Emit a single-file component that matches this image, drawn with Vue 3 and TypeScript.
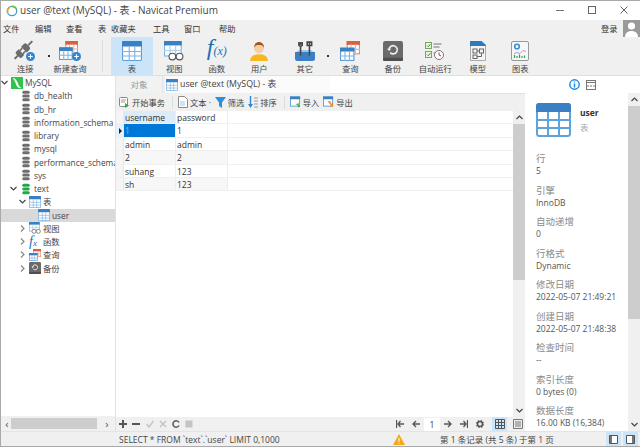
<script setup lang="ts">
const menus = [
  { label: '文件', width: 32 },
  { label: '编辑', width: 31 },
  { label: '查看', width: 32 },
  { label: '表', width: 13 },
  { label: '收藏夹', width: 42 },
  { label: '工具', width: 31 },
  { label: '窗口', width: 35 },
  { label: '帮助', width: 20 }
];

const mainTools = [
  { label: '表', icon: 'i-table', active: true, after: '' },
  { label: '视图', icon: 'i-view', after: '' },
  { label: '函数', icon: 'i-func', after: '' },
  { label: '用户', icon: 'i-user', after: 'gap' },
  { label: '其它', icon: 'i-other', after: 'dot' },
  { label: '查询', icon: 'i-query', after: '' },
  { label: '备份', icon: 'i-backup', after: '' },
  { label: '自动运行', icon: 'i-auto', after: '' },
  { label: '模型', icon: 'i-model', after: '' },
  { label: '图表', icon: 'i-chart', after: '' }
];

type TreeRow = { label: string; icon: string; chevron?: 'down' | 'right'; depth: number; selected?: boolean };

const tree: TreeRow[] = [
  { label: 'MySQL', icon: 'i-mysql', chevron: 'down', depth: 0 },
  { label: 'db_health', icon: 'i-db', depth: 1 },
  { label: 'db_hr', icon: 'i-db', depth: 1 },
  { label: 'information_schema', icon: 'i-db', depth: 1 },
  { label: 'library', icon: 'i-db', depth: 1 },
  { label: 'mysql', icon: 'i-db', depth: 1 },
  { label: 'performance_schema', icon: 'i-db', depth: 1 },
  { label: 'sys', icon: 'i-db', depth: 1 },
  { label: 'text', icon: 'i-db-on', chevron: 'down', depth: 1 },
  { label: '表', icon: 'i-table', chevron: 'down', depth: 2 },
  { label: 'user', icon: 'i-table', depth: 3, selected: true },
  { label: '视图', icon: 'i-view', chevron: 'right', depth: 2 },
  { label: '函数', icon: 'i-func', chevron: 'right', depth: 2 },
  { label: '查询', icon: 'i-query', chevron: 'right', depth: 2 },
  { label: '备份', icon: 'i-backup', chevron: 'right', depth: 2 }
];

const rows = [
  ['1', '1'],
  ['admin', 'admin'],
  ['2', '2'],
  ['suhang', '123'],
  ['sh', '123']
];

const info = [
  ['行', '5'],
  ['引擎', 'InnoDB'],
  ['自动递增', '0'],
  ['行格式', 'Dynamic'],
  ['修改日期', '2022-05-07 21:49:21'],
  ['创建日期', '2022-05-07 21:48:38'],
  ['检查时间', '--'],
  ['索引长度', '0 bytes (0)'],
  ['数据长度', '16.00 KB (16,384)']
];
</script>

<template>
  <div class="window">
    <svg class="defs" width="0" height="0">
      <symbol id="i-table" viewBox="0 0 18 18">
        <rect x=".5" y=".5" width="17" height="17" rx="1" fill="#fff" stroke="#5c9bd6" />
        <rect width="18" height="5" rx="1" fill="#3b80c2" />
        <path d="M6.500 5v13M11.500 5v13M0 9.500h18M0 13.500h18" stroke="#7db4e6" fill="none" />
      </symbol>
      <symbol id="i-table-big" viewBox="0 0 35 34">
        <rect x="1" y="1" width="33" height="32" rx="2.500" fill="#fff" stroke="#5fa3dc" stroke-width="2" />
        <path d="M0 3a3 3 0 0 1 3-3h29a3 3 0 0 1 3 3v6H0z" fill="#3b80c2" />
        <path d="M12 9v24M23 9v24M1 17h33M1 25h33" stroke="#5fa3dc" stroke-width="2" fill="none" />
      </symbol>
      <symbol id="i-db" viewBox="-1 -1 12 16">
        <g fill="#6e6e6e">
          <rect y="0" width="10" height="4" rx="2" />
          <rect y="5" width="10" height="4" rx="2" />
          <rect y="10" width="10" height="4" rx="2" />
        </g>
      </symbol>
      <symbol id="i-db-on" viewBox="-1 -1 12 16">
        <g fill="#1fa84a">
          <rect y="0" width="10" height="4" rx="2" />
          <rect y="5" width="10" height="4" rx="2" />
          <rect y="10" width="10" height="4" rx="2" />
        </g>
      </symbol>
      <symbol id="i-mysql" viewBox="0 0 14 14">
        <rect width="14" height="14" fill="#2fc24d" />
        <path d="M2 1c3 1 5 3 6 6s2 4 4 6c-3 0-5-1-6-4S4 4 2 1z" fill="#fff" />
      </symbol>
      <symbol id="i-view" viewBox="0 0 18 18">
        <rect x=".5" y=".5" width="15" height="13" fill="#fff" stroke="#7db4e6" />
        <rect width="16" height="4" fill="#3b80c2" />
        <path d="M5.500 4v10M10.500 4v10M0 8.500h16" stroke="#a9cfee" fill="none" />
        <circle cx="7.500" cy="14" r="3" fill="#fff" stroke="#555" />
        <circle cx="14" cy="14" r="3" fill="#fff" stroke="#555" />
      </symbol>
      <symbol id="i-user" viewBox="0 0 18 18">
        <path d="M1 18c0-4 3-6 8-6s8 2 8 6z" fill="#f6b81f" />
        <circle cx="9" cy="6.500" r="4.500" fill="#f6cda5" />
        <path d="M4.500 6c0-3 2-5 4.500-5s4.500 2 4.500 5c-1-2-2-2.500-4.500-2.500S5.500 4 4.500 6z" fill="#a3561c" />
      </symbol>
      <symbol id="i-other" viewBox="0 0 18 18">
        <path d="M0 10h18v6a2 2 0 0 1-2 2H2a2 2 0 0 1-2-2z" fill="#3b80c2" />
        <path d="M1 10l3-2h10l3 2z" fill="#9cc6e8" />
        <path d="M5 1v2.500M3.500 1v3l1.500 1 1.500-1V1M5 5v8" stroke="#444" stroke-width="1.400" fill="none" />
        <path d="M13 1v12M11 1h4v3h-4z" stroke="#444" stroke-width="1.400" fill="none" />
      </symbol>
      <symbol id="i-query" viewBox="0 0 18 18">
        <rect x="6.500" y=".5" width="11" height="11" fill="#fff" stroke="#e58a72" />
        <rect x="6" width="12" height="3.500" fill="#dc5f41" />
        <path d="M10 3v9M14 3v9M6 7.500h12" stroke="#eeb0a0" fill="none" />
        <rect x=".5" y="6.500" width="12" height="11" fill="#fff" stroke="#5c9bd6" />
        <rect y="6" width="13" height="3.500" fill="#3b80c2" />
        <path d="M4.500 9v9M8.500 9v9M0 13.500h13" stroke="#7db4e6" fill="none" />
      </symbol>
      <symbol id="i-backup" viewBox="0 0 18 18">
        <rect width="18" height="18" rx="2" fill="#6a6a6a" />
        <rect y="15" width="18" height="3" rx="1" fill="#4f4f4f" />
        <path d="M5.500 7.500a3.700 3.700 0 1 1 1 3" stroke="#eee" stroke-width="1.500" fill="none" />
        <path d="M3.500 7h4l-2 2z" fill="#eee" />
      </symbol>
      <symbol id="i-auto" viewBox="0 0 20 18">
        <rect x=".5" y=".5" width="6" height="6" fill="#eaf4e2" stroke="#7aa85a" />
        <rect x=".5" y="9.500" width="6" height="6" fill="#eaf4e2" stroke="#7aa85a" />
        <path d="M2 3.500l1.300 1.300L5.500 2M2 12.500l1.300 1.300L5.500 11" stroke="#3e9a2d" fill="none" />
        <path d="M8.500 2h8M8.500 5h6M8.500 11h2" stroke="#777" fill="none" />
        <circle cx="14" cy="13" r="4.500" fill="#fff" stroke="#777" />
        <path d="M14 10.500V13l2 1" stroke="#c0392b" fill="none" />
      </symbol>
      <symbol id="i-model" viewBox="0 0 16 20">
        <path d="M.5.500h11l4 4v15H.5z" fill="#f4f4f4" stroke="#aaa" />
        <path d="M0 0h11.500l4.500 4v1H0z" fill="#2f79bd" />
        <rect x="3" y="8" width="4" height="4" fill="none" stroke="#666" />
        <rect x="9.500" y="8" width="4" height="4" fill="none" stroke="#666" />
        <rect x="3" y="14" width="4" height="3.500" fill="none" stroke="#666" />
        <path d="M7 10h2.500M11.500 12v3.500H7" stroke="#666" fill="none" />
      </symbol>
      <symbol id="i-chart" viewBox="0 0 18 20">
        <rect x=".5" y=".5" width="17" height="19" rx="1.500" fill="#f7f7f7" stroke="#999" />
        <circle cx="6" cy="5.500" r="2.300" fill="#fff" stroke="#2f8fe0" stroke-width="1.600" />
        <path d="M3 12.500l3-1 3 1 3-3 3 1" stroke="#c58fd8" fill="none" />
        <path d="M3.500 17v-3M6 17v-2M8.500 17v-3.500M11 17v-2M13.500 17v-2.500" stroke="#2aa84e" stroke-width="1.200" fill="none" />
      </symbol>
      <symbol id="i-add" viewBox="0 0 8 8">
        <circle cx="4" cy="4" r="4" fill="#2f86d2" />
        <path d="M4 2v4M2 4h4" stroke="#fff" />
      </symbol>
    </svg>

    <header class="titlebar">
      <svg class="app-logo" viewBox="0 0 14 14">
        <circle cx="7" cy="7" r="5.500" fill="#fff" stroke="#3b9be0" stroke-width="1.500" />
        <path d="M2 9a5.500 5.500 0 0 1 2-6" stroke="#f0a020" stroke-width="2" fill="none" />
        <path d="M7 1.500a5.500 5.500 0 0 1 5 3" stroke="#6fbf3a" stroke-width="2" fill="none" />
      </svg>
      <span class="title">user @text (MySQL) - 表 - Navicat Premium</span>
      <div class="winctl">
        <svg width="9" height="9" viewBox="0 0 9 9"><path d="M0 4.500h8" stroke="#777" /></svg>
        <svg width="9" height="9" viewBox="0 0 9 9"><rect x=".5" y=".5" width="7" height="7" fill="none" stroke="#666" /></svg>
        <svg width="9" height="9" viewBox="0 0 9 9"><path d="M.5.500l7 7M7.500.500l-7 7" stroke="#666" /></svg>
      </div>
    </header>

    <nav class="menubar">
      <span v-for="m in menus" :key="m.label" :style="{ width: m.width + 'px' }">{{ m.label }}</span>
      <span class="login">登录</span>
      <div class="avatar">
        <svg width="17" height="17" viewBox="0 0 17 17">
          <circle cx="8.500" cy="6" r="3.600" fill="#fff" />
          <path d="M2 17c0-4 3-6 6.500-6s6.500 2 6.500 6z" fill="#fff" />
        </svg>
      </div>
    </nav>

    <section class="toolbar">
      <button class="tool connect">
        <span class="tool-ico">
          <svg width="22" height="21" viewBox="0 0 22 21">
            <g transform="rotate(-45 9.500 10)" fill="#6c6c6c">
              <rect x="-3" y="9" width="6" height="2" />
              <path d="M3 6h3.500v8H3a1.500 1.500 0 0 1-1.500-1.500v-5A1.500 1.500 0 0 1 3 6z" />
              <rect x="6.500" y="7" width="3.500" height="1.600" />
              <rect x="6.500" y="11.400" width="3.500" height="1.600" />
              <path d="M10 6h4a2 2 0 0 1 2 2v4a2 2 0 0 1-2 2h-4z" />
              <rect x="16" y="9" width="6" height="2" />
            </g>
            <use href="#i-add" x="12" y="12" width="9" height="9" />
          </svg>
        </span>
        <span>连接</span>
      </button>
      <i class="dot"></i>
      <button class="tool newquery">
        <span class="tool-ico">
          <svg width="22" height="21" viewBox="0 0 22 21">
            <use href="#i-query" width="19" height="19" y="1" />
            <use href="#i-add" x="13" y="12" width="9" height="9" />
          </svg>
        </span>
        <span>新建查询</span>
      </button>
      <i class="sep"></i>
      <template v-for="t in mainTools" :key="t.label">
        <button class="tool" :class="{ active: t.active }">
          <span class="tool-ico">
            <span v-if="t.icon === 'i-func'" class="fx fx-lg"><em>f</em><small>(x)</small></span>
            <svg v-else width="20" height="20"><use :href="'#' + t.icon" /></svg>
          </span>
          <span>{{ t.label }}</span>
        </button>
        <i v-if="t.after === 'dot'" class="dot"></i>
        <i v-else-if="t.after === 'gap'" class="spacer"></i>
      </template>
    </section>

    <main class="body">
      <aside class="sidebar">
        <ul class="tree">
          <li v-for="row in tree" :key="row.label + row.depth" class="tree-row" :class="[`d${row.depth}`, { selected: row.selected }]">
            <svg v-if="row.chevron" class="chev" width="7" height="7" viewBox="0 0 7 7">
              <path v-if="row.chevron === 'down'" d="M.5 2l3 3 3-3" stroke="#444" stroke-width="1.200" fill="none" />
              <path v-else d="M2 .5l3 3-3 3" stroke="#888" stroke-width="1.200" fill="none" />
            </svg>
            <i v-else class="chev"></i>
            <span v-if="row.icon === 'i-func'" class="fx tree-ico"><em>f</em><small>x</small></span>
            <svg v-else class="tree-ico"><use :href="'#' + row.icon" /></svg>
            <span class="tree-label">{{ row.label }}</span>
          </li>
        </ul>
        <div class="hscroll">
          <span class="sb-arrow">‹</span>
          <i class="hthumb"></i>
          <span class="sb-arrow">›</span>
        </div>
      </aside>

      <div class="center">
        <div class="tabs">
          <span class="tab-object">对象</span>
          <span class="tab-active">
            <svg width="12" height="12"><use href="#i-table" /></svg>
            user @text (MySQL) - 表
          </span>
          <i class="tab-rest"></i>
        </div>
        <div class="subtools">
          <span class="sub">
            <svg width="11" height="11" viewBox="0 0 11 11">
              <rect x=".5" y=".5" width="8" height="9" rx="1" fill="#fff" stroke="#888" />
              <path d="M2 3h5M2 5h4" stroke="#999" />
              <path d="M6 6l4 2.500L6 11z" fill="#3aa845" />
            </svg>
            开始事务
          </span>
          <i class="sub-sep"></i>
          <span class="sub">
            <svg width="10" height="12" viewBox="0 0 10 12">
              <path d="M.5.500h6l3 3v8h-9z" fill="#fff" stroke="#888" />
              <path d="M2 5h5v5H2z" fill="#cfe3f5" />
            </svg>
            文本 ·
          </span>
          <span class="sub">
            <svg width="11" height="11" viewBox="0 0 11 11"><path d="M0 0h11L7 5.500V11L4 9V5.500z" fill="#2f8ed6" /></svg>
            筛选
          </span>
          <span class="sub">
            <svg width="10" height="12" viewBox="0 0 10 12">
              <path d="M2.500 0v10" stroke="#2f86d2" stroke-width="1.400" />
              <path d="M0 8l2.500 4L5 8z" fill="#2f86d2" />
              <path d="M6 2h4M6 5h4M6 8h4M6 11h4" stroke="#999" />
            </svg>
            排序
          </span>
          <i class="sub-sep"></i>
          <span class="sub">
            <svg width="11" height="12" viewBox="0 0 12 12">
              <rect x=".5" y=".5" width="10" height="10" fill="#fff" stroke="#5c9bd6" />
              <rect width="11" height="3" fill="#3b80c2" />
              <path d="M11 6L6 9l2 0 1 3 2-1-2-3z" fill="#3aa845" />
            </svg>
            导入
          </span>
          <span class="sub">
            <svg width="11" height="12" viewBox="0 0 12 12">
              <rect x=".5" y=".5" width="10" height="10" fill="#fff" stroke="#5c9bd6" />
              <rect width="11" height="3" fill="#3b80c2" />
              <path d="M5 5h3l1 3 2-1.500V11H7l1.500-1.500z" fill="#f0902a" />
            </svg>
            导出
          </span>
        </div>

        <div class="grid-area">
          <div class="grid-wrap">
            <div class="grid-row head">
              <i class="gutter"></i>
              <span class="cell c-user">username</span>
              <span class="cell">password</span>
            </div>
            <div v-for="(r, i) in rows" :key="i" class="grid-row" :class="{ current: i === 0, alt: i === 2 || i === 4 }">
              <i class="gutter"><b v-if="i === 0" class="marker"></b></i>
              <span class="cell c-user">{{ r[0] }}</span>
              <span class="cell">{{ r[1] }}</span>
            </div>
          </div>
          <div class="vscroll">
            <svg class="arrow" width="7" height="5" viewBox="0 0 7 5"><path d="M.5 4l3-3 3 3" stroke="#444" stroke-width="1.200" fill="none" /></svg>
            <i class="thumb grid-thumb"></i>
            <i class="track"></i>
            <svg class="arrow" width="7" height="5" viewBox="0 0 7 5"><path d="M.5 1l3 3 3-3" stroke="#444" stroke-width="1.200" fill="none" /></svg>
          </div>
        </div>

        <div class="gridbar">
          <div class="edit-btns">
            <svg width="8" height="8" viewBox="0 0 8 8"><path d="M4 0v8M0 4h8" stroke="#555" stroke-width="2" /></svg>
            <svg width="8" height="8" viewBox="0 0 8 8"><path d="M0 4h8" stroke="#555" stroke-width="2" /></svg>
            <svg width="8" height="8" viewBox="0 0 8 8"><path d="M.5 4l2.500 3L7.500 1" stroke="#c4c4c4" stroke-width="1.500" fill="none" /></svg>
            <svg width="8" height="8" viewBox="0 0 8 8"><path d="M1 1l6 6M7 1L1 7" stroke="#c4c4c4" stroke-width="1.500" /></svg>
            <svg width="8" height="8" viewBox="0 0 8 8"><path d="M7 2.500A3.200 3.200 0 1 0 7 5.500" stroke="#555" stroke-width="1.500" fill="none" /></svg>
            <svg width="8" height="8" viewBox="0 0 8 8"><rect x=".5" y=".5" width="7" height="7" fill="#c4c4c4" /></svg>
          </div>
          <div class="pager">
            <svg width="8" height="8" viewBox="0 0 8 8"><path d="M.5 0v8M8 4H2M4.500 1L2 4l2.500 3" stroke="#555" stroke-width="1.300" fill="none" /></svg>
            <svg width="8" height="8" viewBox="0 0 8 8"><path d="M8 4H1M4 1L1 4l3 3" stroke="#555" stroke-width="1.300" fill="none" /></svg>
            <span class="page-input">1</span>
            <svg width="8" height="8" viewBox="0 0 8 8"><path d="M0 4h7M4 1l3 3-3 3" stroke="#555" stroke-width="1.300" fill="none" /></svg>
            <svg width="8" height="8" viewBox="0 0 8 8"><path d="M7.500 0v8M0 4h6M3.500 1L6 4 3.500 7" stroke="#555" stroke-width="1.300" fill="none" /></svg>
            <svg width="8" height="8" viewBox="0 0 8 8"><circle cx="4" cy="4" r="2.500" fill="none" stroke="#555" stroke-width="1.600" /><circle cx="4" cy="4" r="3.800" fill="none" stroke="#555" stroke-dasharray="1.500 1.500" /></svg>
          </div>
          <span class="view-btn on">
            <svg width="10" height="10" viewBox="0 0 10 10"><path d="M.5.500h9v9h-9zM3.500.500v9M6.500.500v9M.5 3.500h9M.5 6.500h9" stroke="#555" fill="none" /></svg>
          </span>
          <span class="view-btn">
            <svg width="10" height="10" viewBox="0 0 10 10"><path d="M.5.500h9v9h-9z" stroke="#777" fill="#eee" /><path d="M2 3h6M2 5h6M2 7h6" stroke="#777" /></svg>
          </span>
        </div>
      </div>

      <aside class="info">
        <div class="info-tabs">
          <svg width="11" height="11" viewBox="0 0 11 11">
            <circle cx="5.500" cy="5.500" r="4.700" fill="#fff" stroke="#1e88e5" stroke-width="1.400" />
            <path d="M5.500 2.500v1M5.500 4.500v4" stroke="#1e88e5" stroke-width="1.500" />
          </svg>
          <svg width="10" height="10" viewBox="0 0 10 10">
            <rect x=".5" y=".5" width="9" height="9" fill="#fff" stroke="#777" />
            <path d="M0 2.500h10M2 5v2M5 5v2M8 5v2" stroke="#777" />
          </svg>
        </div>
        <div class="info-main">
          <div class="info-body">
            <div class="obj">
              <svg width="35" height="34"><use href="#i-table-big" /></svg>
              <div class="obj-text">
                <b>user</b>
                <span>表</span>
              </div>
            </div>
            <dl class="props">
              <div v-for="p in info" :key="p[0]" class="prop">
                <dt>{{ p[0] }}</dt>
                <dd>{{ p[1] }}</dd>
              </div>
            </dl>
          </div>
          <div class="vscroll">
            <svg class="arrow" width="7" height="5" viewBox="0 0 7 5"><path d="M.5 4l3-3 3 3" stroke="#444" stroke-width="1.200" fill="none" /></svg>
            <i class="thumb info-thumb"></i>
            <i class="track"></i>
            <svg class="arrow" width="7" height="5" viewBox="0 0 7 5"><path d="M.5 1l3 3 3-3" stroke="#444" stroke-width="1.200" fill="none" /></svg>
          </div>
        </div>
      </aside>
    </main>

    <footer class="status">
      <span class="sql">SELECT * FROM `text`.`user` LIMIT 0,1000</span>
      <svg class="warn" width="12" height="11" viewBox="0 0 12 11">
        <path d="M6 0l6 11H0z" fill="#f5a81c" />
        <path d="M6 4v4M6 8.800v1" stroke="#fff" />
      </svg>
      <span class="rec">第 1 条记录 (共 5 条) 于第 1 页</span>
      <span class="panel-btn">
        <svg width="9" height="9" viewBox="0 0 9 9"><path d="M.5.500h8v8h-8z" fill="#fff" stroke="#555" /><rect x="1" y="1" width="2" height="7" fill="#777" /></svg>
      </span>
      <span class="panel-btn">
        <svg width="9" height="9" viewBox="0 0 9 9"><path d="M.5.500h8v8h-8z" fill="#fff" stroke="#555" /><rect x="6" y="1" width="2" height="7" fill="#777" /></svg>
      </span>
    </footer>
  </div>
</template>

<style>
html,
body {
  margin: 0;
  overflow: hidden;
}
</style>

<style scoped>
.window {
  width: 640px;
  height: 447px;
  box-sizing: border-box;
  border: 1px solid #a9a9a9;
  border-right: 0;
  display: flex;
  flex-direction: column;
  overflow: hidden;
  background: #f0f0f0;
  color: #333;
  font-family: "Open Sans", "Noto Sans CJK SC", sans-serif;
  font-size: 8.500px;
  line-height: 13px;
}

.defs {
  position: absolute;
}

.titlebar {
  height: 19px;
  flex: none;
  display: flex;
  align-items: center;
  padding-left: 5px;
  background: #fff;
}

.app-logo {
  width: 12px;
  height: 12px;
  margin-right: 2px;
}

.title {
  font-size: 10px;
  color: #444;
}

.winctl {
  margin-left: auto;
  width: 84px;
  display: flex;
  justify-content: space-between;
  padding-right: 11px;
  box-sizing: border-box;
}

.menubar {
  height: 17px;
  flex: none;
  display: flex;
  align-items: center;
  padding-left: 2px;
  color: #333;
  font-size: 8.250px;
}

.menubar span {
  flex: none;
}

.menubar .login {
  margin-left: auto;
  width: 22px;
}

.avatar {
  width: 17px;
  height: 17px;
  background: #9a9a9a;
}

.toolbar {
  height: 38px;
  flex: none;
  display: flex;
  padding-left: 3px;
  font-size: 8.250px;
  border-bottom: 1px solid #e0e0e0;
}

.tool {
  width: 42.500px;
  padding: 0;
  border: 0;
  background: none;
  font: inherit;
  color: #444;
  display: flex;
  flex-direction: column;
  align-items: center;
}

.tool.active {
  background: #cce4f7;
}

.tool.newquery {
  width: 41px;
}

.tool-ico {
  height: 24px;
  display: flex;
  align-items: center;
  margin-top: 2px;
}

.fx {
  display: inline-flex;
  align-items: baseline;
  font-family: "Liberation Serif", serif;
  font-style: italic;
  color: #1f6fb8;
  line-height: 12px;
}

.fx em {
  font-size: 14px;
}

.fx small {
  font-size: 9px;
}

.fx-lg {
  line-height: 22px;
  margin-top: -4px;
}

.fx-lg em {
  font-size: 24px;
}

.fx-lg small {
  font-size: 12px;
}

.dot {
  width: 3px;
  position: relative;
}

.dot::after {
  content: "";
  position: absolute;
  top: 18px;
  left: 1px;
  width: 2px;
  height: 2px;
  background: #333;
}

.spacer {
  width: 3px;
}

.sep {
  width: 1px;
  height: 32px;
  margin: 3px 8px 0 11px;
  background: #dcdcdc;
}

.body {
  flex: 1;
  min-height: 0;
  display: flex;
}

.sidebar {
  width: 114px;
  flex: none;
  display: flex;
  flex-direction: column;
  background: #fff;
  border-right: 1px solid #e2e2e2;
}

.tree {
  flex: 1;
  list-style: none;
  margin: 0;
  padding: 0;
  overflow: hidden;
}

.tree-row {
  height: 13.250px;
  display: flex;
  align-items: center;
  white-space: nowrap;
  color: #444;
}

.tree-row.selected {
  background: #d9d9d9;
}

.chev {
  width: 7px;
  flex: none;
  margin-right: 3px;
}

.tree-ico {
  width: 12px;
  height: 12px;
  flex: none;
  margin-right: 2px;
}

.tree-label {
  font-size: 8.300px;
}

.d0 {
  padding-left: 0;
}

.d1 {
  padding-left: 9px;
}

.d2 {
  padding-left: 18px;
}

.d3 {
  padding-left: 27px;
}

.hscroll {
  height: 15px;
  flex: none;
  display: flex;
  align-items: center;
  background: #f0f0f0;
  padding: 0 2px;
}

.sb-arrow {
  width: 8px;
  color: #555;
  font-size: 11px;
  text-align: center;
}

.hthumb {
  width: 86px;
  height: 11px;
  margin-right: 6px;
  background: #cdcdcd;
}

.center {
  flex: 1;
  min-width: 0;
  display: flex;
  flex-direction: column;
}

.tabs {
  height: 17px;
  flex: none;
  display: flex;
}

.tab-object {
  width: 47px;
  margin-right: 2px;
  text-align: center;
  line-height: 17px;
  color: #999;
  background: #f2f2f2;
  border-right: 1px solid #e4e4e4;
  box-sizing: border-box;
}

.tab-active {
  width: 165px;
  display: flex;
  align-items: center;
  gap: 2px;
  padding-left: 1px;
  box-sizing: border-box;
  background: #fbfbfb;
  color: #444;
  font-size: 8.800px;
}

.tab-rest {
  flex: 1;
  background: #fff;
  box-shadow: 0 1px 0 #e0e0e0;
}

.subtools {
  height: 18px;
  flex: none;
  display: flex;
  align-items: center;
  padding-left: 3px;
  color: #444;
  font-size: 8.250px;
}

.sub {
  display: flex;
  align-items: center;
  gap: 2px;
  margin-right: 4px;
}

.sub-sep {
  width: 1px;
  height: 13px;
  margin: 0 5px 0 3px;
  background: #dcdcdc;
}

.grid-area {
  flex: 1;
  min-height: 0;
  display: flex;
  background: #fff;
}

.grid-wrap {
  flex: 1;
}

.grid-row {
  display: flex;
  height: 13.400px;
  line-height: 13px;
  border-bottom: 1px solid #f0f0f0;
  box-sizing: border-box;
}

.grid-row.alt .cell {
  background: #f7f7f7;
}

.gutter {
  width: 8px;
  flex: none;
  background: #f5f5f5;
  border-right: 1px solid #e8e8e8;
  box-sizing: border-box;
  display: flex;
  align-items: center;
  justify-content: flex-end;
}

.current .gutter {
  background: #e5f1fb;
}

.marker {
  border-left: 3px solid #222;
  border-top: 3px solid transparent;
  border-bottom: 3px solid transparent;
  margin-right: 1px;
}

.cell {
  width: 52px;
  padding-left: 1px;
  box-sizing: border-box;
  border-right: 1px solid #eee;
  white-space: nowrap;
}

.head .c-user {
  background: #dcebf7;
}

.current .c-user {
  background: #0078d7;
  color: #7fb5e8;
}

.vscroll {
  width: 12px;
  flex: none;
  display: flex;
  flex-direction: column;
  align-items: center;
  background: #f0f0f0;
}

.arrow {
  height: 13px;
  flex: none;
}

.thumb {
  width: 12px;
  flex: none;
  background: #cdcdcd;
}

.grid-thumb {
  height: 156px;
}

.info-thumb {
  height: 213px;
}

.track {
  flex: 1;
}

.gridbar {
  height: 14px;
  flex: none;
  display: flex;
  align-items: center;
}

.edit-btns {
  display: flex;
  gap: 5.300px;
  padding-left: 3px;
}

.pager {
  margin-left: auto;
  display: flex;
  align-items: center;
  gap: 8px;
}

.page-input {
  width: 16px;
  margin: 0 -4px;
  text-align: center;
  background: #fff;
  line-height: 13px;
}

.view-btn {
  width: 15px;
  height: 14px;
  display: flex;
  align-items: center;
  justify-content: center;
  margin-left: 3px;
}

.view-btn:first-of-type {
  margin-left: 8px;
}

.view-btn.on {
  background: #cce4f7;
}

.info {
  width: 115px;
  flex: none;
  display: flex;
  flex-direction: column;
  background: #fff;
}

.info-tabs {
  height: 17px;
  flex: none;
  display: flex;
  align-items: center;
  justify-content: center;
  gap: 6px;
}

.info-main {
  flex: 1;
  min-height: 0;
  display: flex;
}

.info-body {
  flex: 1;
  min-width: 0;
  padding: 10px 0 0 11px;
  overflow: hidden;
}

.obj {
  display: flex;
  gap: 9px;
  height: 46px;
}

.obj-text {
  display: flex;
  flex-direction: column;
  gap: 2px;
  padding-top: 3px;
}

.obj-text span {
  color: #aaa;
}

.props {
  margin: 0;
  padding-top: 3px;
}

.prop {
  height: 31.500px;
}

dt {
  color: #8a8a8a;
  font-size: 9.500px;
}

dd {
  margin: -1px 0 0;
  color: #555;
  white-space: nowrap;
}

.status {
  height: 15px;
  flex: none;
  display: flex;
  align-items: center;
  padding: 0 2px 0 118px;
  background: #f0f0f0;
  border-top: 1px solid #e4e4e4;
  box-sizing: border-box;
}

.sql {
  width: 274px;
  color: #444;
}

.warn {
  margin-right: 35px;
}

.rec {
  color: #444;
}

.panel-btn {
  width: 15px;
  height: 14px;
  margin-left: 2px;
  display: flex;
  align-items: center;
  justify-content: center;
  background: #cce4f7;
}

.rec + .panel-btn {
  margin-left: auto;
}
</style>
